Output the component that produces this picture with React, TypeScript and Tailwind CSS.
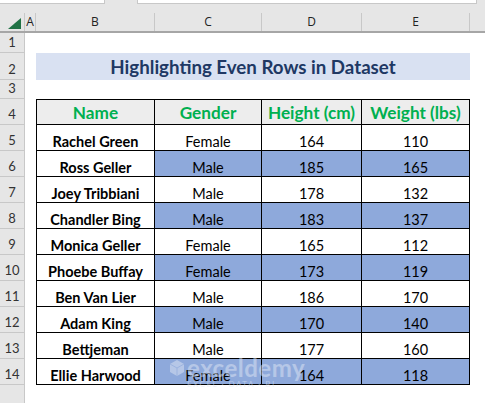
import React from "react";

const people = [
  { name: "Rachel Green", gender: "Female", height: 164, weight: 110 },
  { name: "Ross Geller", gender: "Male", height: 185, weight: 165 },
  { name: "Joey Tribbiani", gender: "Male", height: 178, weight: 132 },
  { name: "Chandler Bing", gender: "Male", height: 183, weight: 137 },
  { name: "Monica Geller", gender: "Female", height: 165, weight: 112 },
  { name: "Phoebe Buffay", gender: "Female", height: 173, weight: 119 },
  { name: "Ben Van Lier", gender: "Male", height: 186, weight: 170 },
  { name: "Adam King", gender: "Male", height: 170, weight: 140 },
  { name: "Bettjeman", gender: "Male", height: 177, weight: 160 },
  { name: "Ellie Harwood", gender: "Female", height: 164, weight: 118 },
];

function RowNum({ n, h }: { n: number | string; h: string }) {
  return (
    <div
      className={`w-[25px] ${h} shrink-0 bg-[#e6e6e6] border-b border-r border-[#c8c8c8] flex items-end justify-center pb-[2px] text-[13px] leading-[16px] text-[#333]`}
    >
      {n}
    </div>
  );
}

// Excel cells default to bottom alignment
const cell = "flex items-end justify-center border-r border-b border-black";

export default function App() {
  return (
    <div className="relative w-[485px] h-[403px] overflow-hidden bg-white font-['Lato',sans-serif]">
      {/* formula bar remains */}
      <div className="h-[13px] bg-[#e6e6e6] flex">
        <div className="w-[105px] h-[4px] bg-white border-b border-r border-[#c8c8c8]" />
        <div className="w-[32px]" />
        <div className="w-[340px] h-[4px] bg-white border-b border-l border-r border-[#c8c8c8]" />
      </div>

      {/* column letters */}
      <div className="flex h-[20px] bg-[#e6e6e6] border-b-2 border-[#a6a6a6] font-['Open_Sans',sans-serif] text-[12px] text-[#222]">
        <div className="relative w-[25px] shrink-0 border-r border-[#c8c8c8]">
          <div className="absolute right-[3px] bottom-[2px] w-0 h-0 border-l-[13px] border-l-transparent border-b-[11px] border-b-[#217346]" />
        </div>
        <div className="w-[11px] flex items-center justify-center border-r border-[#c8c8c8]">A</div>
        <div className="w-[119px] flex items-center justify-center border-r border-[#c8c8c8]">B</div>
        <div className="w-[107px] flex items-center justify-center border-r border-[#c8c8c8]">C</div>
        <div className="w-[100px] flex items-center justify-center border-r border-[#c8c8c8]">D</div>
        <div className="w-[108px] flex items-center justify-center border-r border-[#c8c8c8]">E</div>
        <div className="flex-1" />
      </div>

      {/* row 1 */}
      <div className="flex h-[20px]">
        <RowNum n={1} h="h-[20px]" />
      </div>

      {/* row 2 - title */}
      <div className="flex h-[27px]">
        <RowNum n={2} h="h-[27px]" />
        <div className="w-[11px]" />
        <div className="w-[434px] bg-[#d9e1f2] flex items-end justify-center pb-[1px] text-[18.7px] leading-[24px] font-bold text-[#203864]">
          Highlighting Even Rows in Dataset
        </div>
      </div>

      {/* row 3 */}
      <div className="flex h-[19px]">
        <RowNum n={3} h="h-[19px]" />
      </div>

      {/* header row 4 */}
      <div className="flex h-[26px]">
        <RowNum n={4} h="h-[26px]" />
        <div className="w-[11px]" />
        {["Name", "Gender", "Height (cm)", "Weight (lbs)"].map((t, i) => (
          <div
            key={t}
            className={`${["w-[119px] border-l", "w-[107px]", "w-[100px]", "w-[108px]"][i]} ${cell} border-t bg-[#ededed] pb-[1px] text-[17.2px] leading-[20px] font-bold text-[#00b050]`}
          >
            {t}
          </div>
        ))}
      </div>

      {/* data rows */}
      {people.map((p, i) => {
        const even = i % 2 === 1;
        const fill = even ? "bg-[#8ea9db]" : "bg-white";
        return (
          <div key={p.name} className="flex h-[26px] text-[14.5px] leading-[16px] text-black">
            <RowNum n={i + 5} h="h-[26px]" />
            <div className="w-[11px]" />
            <div className={`w-[119px] border-l ${cell} font-bold`}>{p.name}</div>
            <div className={`w-[107px] ${fill} ${cell}`}>{p.gender}</div>
            <div className={`w-[100px] ${fill} ${cell}`}>{p.height}</div>
            <div className={`w-[108px] ${fill} ${cell}`}>{p.weight}</div>
          </div>
        );
      })}

      {/* row 15 */}
      <div className="flex h-[18px]">
        <div className="w-[25px] h-[18px] bg-[#e6e6e6] border-r border-[#c8c8c8]" />
      </div>

      {/* watermark */}
      <div className="absolute left-[170px] top-[357px] w-[143px] h-[30px] flex items-start gap-[3px] opacity-50 pointer-events-none">
        <svg width="14" height="18" viewBox="0 0 14 18" className="mt-[3px]">
          <path d="M7 0 L14 4 L14 12 L7 16 L0 12 L0 4 Z" fill="#dfe6f4" />
          <path d="M7 8 L14 4 M7 8 L0 4 M7 8 L7 16" stroke="#a9bde3" strokeWidth="1" />
        </svg>
        <div className="flex flex-col leading-none">
          <span className="text-[24px] font-bold text-[#dfe6f4] tracking-[0.5px] leading-[22px]">exceldemy</span>
          <span className="text-[8px] text-[#dfe6f4] tracking-[1.5px] mt-[1px]">EXCEL · DATA · BI</span>
        </div>
      </div>
    </div>
  );
}
